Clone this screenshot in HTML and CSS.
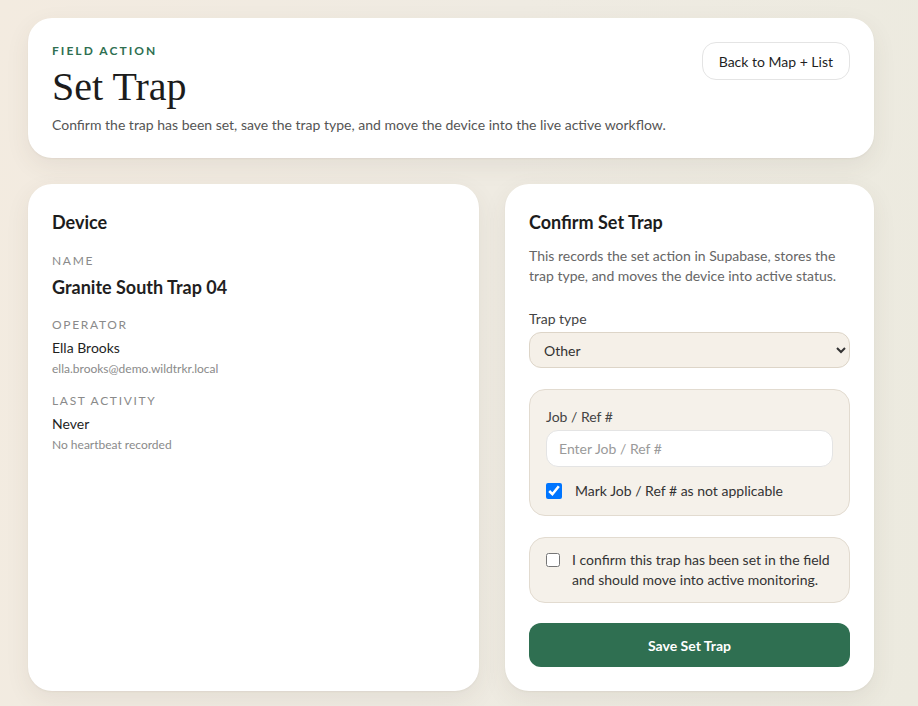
FILE: index.html
```html
<!DOCTYPE html>
<html lang="en">
<head>
    <meta charset="UTF-8">
    <meta name="viewport" content="width=device-width, initial-scale=1.0">
    <title>Set Trap</title>
    <link rel="stylesheet" href="styles.css">
</head>
<body>
    <div class="page">
        <header class="hero card">
            <div class="hero-text">
                <div class="eyebrow">Field Action</div>
                <h1>Set Trap</h1>
                <p class="lead">Confirm the trap has been set, save the trap type, and move the device into the live active workflow.</p>
            </div>
            <button class="back-btn" type="button">Back to Map + List</button>
        </header>

        <div class="columns">
            <section class="card device">
                <h2>Device</h2>
                <div class="field field-name">
                    <div class="field-label">Name</div>
                    <div class="device-name">Granite South Trap 04</div>
                </div>
                <div class="field field-operator">
                    <div class="field-label">Operator</div>
                    <div class="field-value">Ella Brooks</div>
                    <div class="field-sub">ella.brooks@demo.wildtrkr.local</div>
                </div>
                <div class="field field-activity">
                    <div class="field-label">Last Activity</div>
                    <div class="field-value">Never</div>
                    <div class="field-sub">No heartbeat recorded</div>
                </div>
            </section>

            <section class="card confirm">
                <h2>Confirm Set Trap</h2>
                <p class="note">This records the set action in Supabase, stores the trap type, and moves the device into active status.</p>

                <label class="form-label" for="trapType">Trap type</label>
                <select id="trapType" class="select">
                    <option>Other</option>
                </select>

                <div class="panel">
                    <label class="form-label" for="jobRef">Job / Ref #</label>
                    <input id="jobRef" class="text-input" type="text" placeholder="Enter Job / Ref #">
                    <label class="check-row">
                        <input type="checkbox" checked>
                        <span>Mark Job / Ref # as not applicable</span>
                    </label>
                </div>

                <div class="panel panel-tight">
                    <label class="check-row confirm-row">
                        <input type="checkbox">
                        <span>I confirm this trap has been set in the field and should move into active monitoring.</span>
                    </label>
                </div>

                <button class="save-btn" type="button">Save Set Trap</button>
            </section>
        </div>
    </div>
</body>
</html>
```

FILE: styles.css
```css
html, body {
    height: 100%;
}
body {
    margin: 0;
    font-family: Lato, "Noto Sans", sans-serif;
    color: #1f1f1f;
    background: linear-gradient(100deg, #f3ebe0 0%, #efebe2 50%, #eceadf 100%);
    overflow: hidden;
}
.page {
    padding: 18px 44px 0 28px;
}
.card {
    background: #fff;
    border-radius: 24px;
    box-shadow: 0 8px 24px rgba(80, 70, 50, 0.08), 0 1px 2px rgba(80, 70, 50, 0.06);
    box-sizing: border-box;
}
.hero {
    display: flex;
    justify-content: space-between;
    align-items: flex-start;
    gap: 24px;
    padding: 24px;
    height: 140px;
}
.eyebrow {
    font-size: 12px;
    font-weight: 700;
    letter-spacing: 0.17em;
    text-transform: uppercase;
    color: #2f6f51;
    line-height: 16px;
    margin-top: 1px;
}
h1 {
    font-family: "Liberation Serif", "DejaVu Serif", serif;
    font-weight: 400;
    font-size: 40px;
    line-height: 44px;
    margin: 6px 0 6px;
    color: #1c1c1c;
}
.lead {
    margin: 0;
    font-size: 14px;
    line-height: 20px;
    color: #555;
}
.back-btn {
    flex-shrink: 0;
    white-space: nowrap;
    font-family: inherit;
    font-size: 14px;
    color: #1f1f1f;
    background: #fff;
    border: 1px solid #e4e4e4;
    border-radius: 14px;
    padding: 0 16px;
    height: 38px;
}

.columns {
    display: grid;
    grid-template-columns: 451fr 369fr;
    gap: 26px;
    margin-top: 26px;
    height: 507px;
}
.device, .confirm {
    padding: 24px;
}
h2 {
    font-size: 18px;
    font-weight: 700;
    line-height: 28px;
    margin: 0 0 10px;
    color: #1c1c1c;
}
.field-name {
    margin-top: 16px;
}
.field-operator {
    margin-top: 17px;
}
.field-activity {
    margin-top: 15px;
}
.field-label {
    font-size: 12px;
    letter-spacing: 0.14em;
    text-transform: uppercase;
    color: #8a8a8a;
    line-height: 18px;
}
.device-name {
    font-size: 18px;
    font-weight: 700;
    line-height: 24px;
    margin-top: 5px;
}
.field-value {
    font-size: 14px;
    line-height: 20px;
    margin-top: 4px;
}
.field-sub {
    font-size: 12px;
    line-height: 16px;
    color: #8a8a8a;
    margin-top: 3px;
}

.note {
    margin: 0 0 23px;
    font-size: 14px;
    line-height: 20px;
    color: #666;
}
.form-label {
    display: block;
    font-size: 14px;
    line-height: 20px;
    color: #444;
    margin-bottom: 3px;
}
.select {
    display: block;
    width: 100%;
    height: 36px;
    font-family: inherit;
    font-size: 14px;
    color: #333;
    background: #f5f0e8;
    border: 1px solid #ddd5c8;
    border-radius: 12px;
    padding: 0 10px;
}
.panel {
    margin-top: 21px;
    background: #f5f1ea;
    border: 1px solid #e2dbd0;
    border-radius: 16px;
    padding: 17px 16px 14px;
}
.panel-tight {
    padding: 12px 16px;
}
.text-input {
    display: block;
    box-sizing: border-box;
    width: 100%;
    height: 37px;
    font-family: inherit;
    font-size: 14px;
    background: #fff;
    border: 1px solid #e4e4e4;
    border-radius: 12px;
    padding: 0 12px;
}
.text-input::placeholder {
    color: #9a9a9a;
}
.check-row {
    display: flex;
    align-items: center;
    gap: 13px;
    font-size: 14px;
    line-height: 20px;
    color: #333;
    margin-top: 14px;
}
.check-row input {
    margin: 0;
    width: 16px;
    height: 16px;
    flex-shrink: 0;
}
.confirm-row {
    margin-top: 0;
    align-items: flex-start;
    gap: 12px;
}
.confirm-row input {
    margin-top: 3px;
    width: 14px;
    height: 14px;
}
.save-btn {
    display: block;
    width: 100%;
    height: 44px;
    margin-top: 20px;
    font-family: inherit;
    font-size: 14px;
    font-weight: 700;
    color: #fff;
    background: #2f6f51;
    border: none;
    border-radius: 12px;
}
```
